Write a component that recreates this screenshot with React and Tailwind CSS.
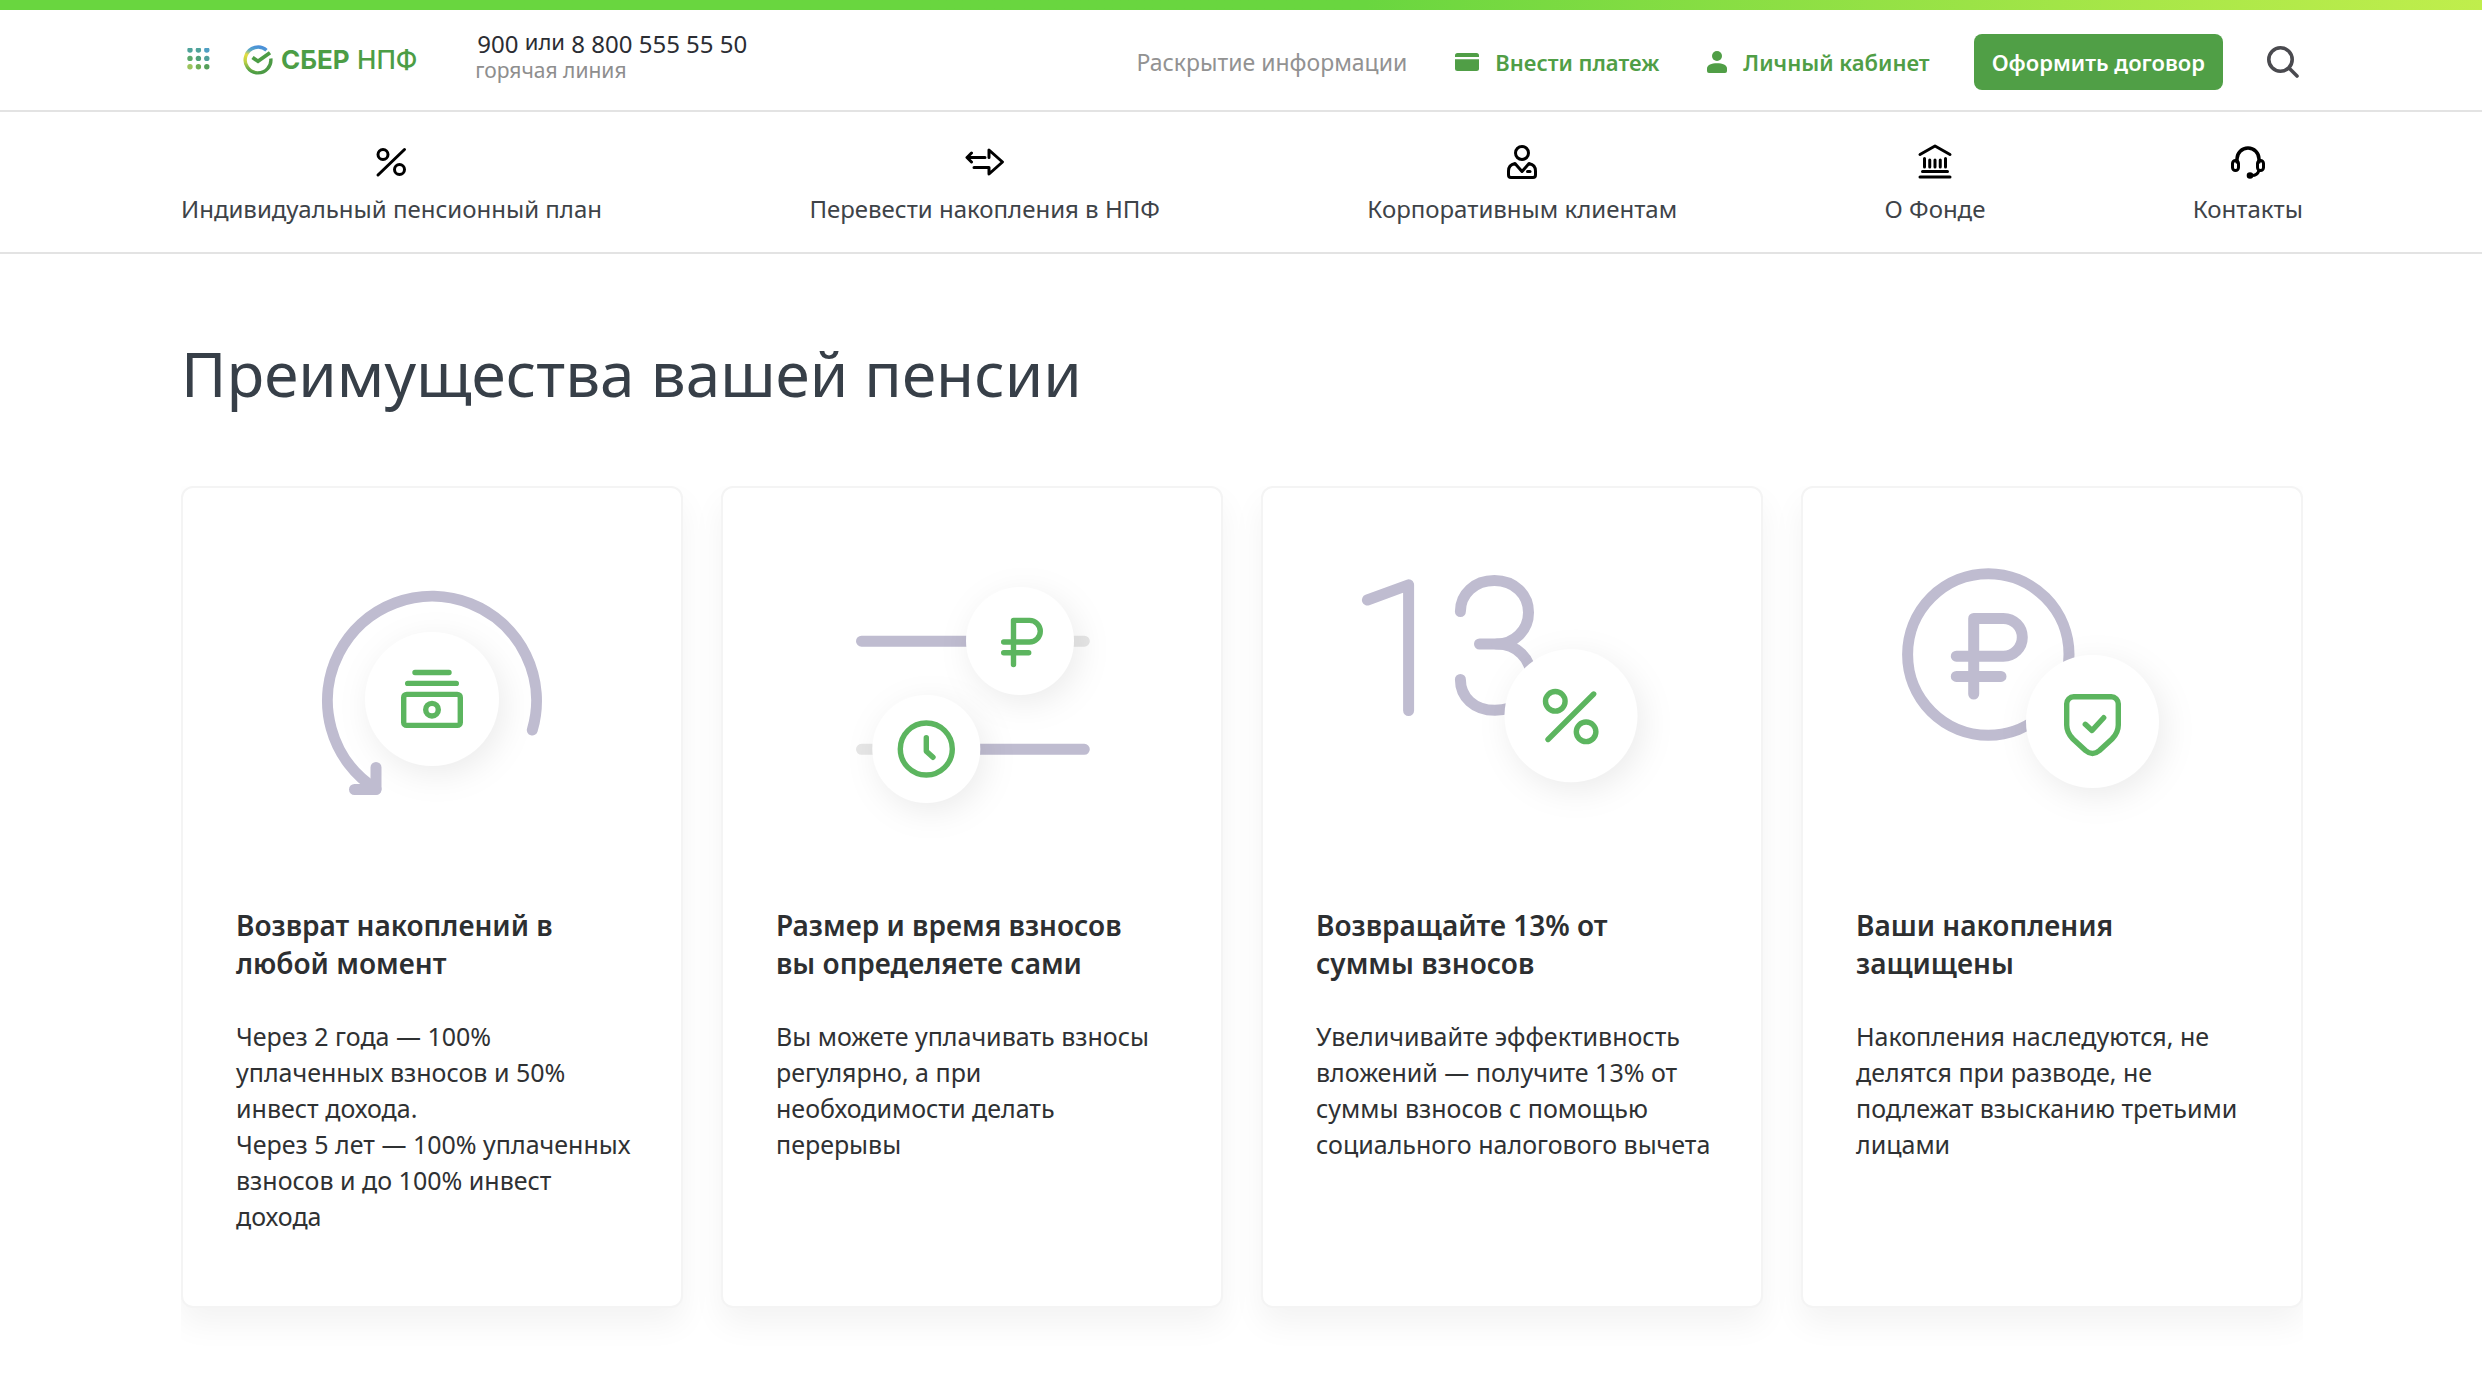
const navItems = [
  { label: "Индивидуальный пенсионный план", icon: <PercentIcon /> },
  { label: "Перевести накопления в НПФ", icon: <TransferIcon /> },
  { label: "Корпоративным клиентам", icon: <PersonIcon /> },
  { label: "О Фонде", icon: <BankIcon /> },
  { label: "Контакты", icon: <HeadsetIcon /> },
];

const benefits = [
  {
    title: "Возврат накоплений в\nлюбой момент",
    text: "Через 2 года — 100%\nуплаченных взносов и 50%\nинвест дохода.\nЧерез 5 лет — 100% уплаченных\nвзносов и до 100% инвест\nдохода",
    picture: <RefundPicture />,
  },
  {
    title: "Размер и время взносов\nвы определяете сами",
    text: "Вы можете уплачивать взносы\nрегулярно, а при\nнеобходимости делать\nперерывы",
    picture: <SlidersPicture />,
  },
  {
    title: "Возвращайте 13% от\nсуммы взносов",
    text: "Увеличивайте эффективность\nвложений — получите 13% от\nсуммы взносов с помощью\nсоциального налогового вычета",
    picture: <ThirteenPicture />,
  },
  {
    title: "Ваши накопления\nзащищены",
    text: "Накопления наследуются, не\nделятся при разводе, не\nподлежат взысканию третьими\nлицами",
    picture: <ShieldPicture />,
  },
];

function NavIcon({ children }) {
  return (
    <svg
      viewBox="0 0 40 40"
      className="size-10 fill-none stroke-black stroke-3"
      strokeLinecap="round"
      strokeLinejoin="round"
      aria-hidden="true"
    >
      {children}
    </svg>
  );
}

function PercentIcon() {
  return (
    <NavIcon>
      <circle cx="12" cy="12.500" r="5" />
      <circle cx="28.500" cy="27.500" r="5" />
      <path d="M33.500 7.500 7 33" />
    </NavIcon>
  );
}

function TransferIcon() {
  return (
    <NavIcon>
      <path d="M20 15.500H2.500M6.500 11 2 15.500 6.500 20" />
      <path d="M9 25.500H24V32L37.500 20 24 8V15.500" />
    </NavIcon>
  );
}

function PersonIcon() {
  return (
    <NavIcon>
      <circle cx="20" cy="11" r="6.500" />
      <path d="M13 21.500C8.500 22.500 6.500 25.500 6.500 29V33a2.500 2.500 0 0 0 2.500 2.500H31a2.500 2.500 0 0 0 2.500-2.500V29C33.500 25.500 31.500 22.500 27 21.500L20 29.500Z" />
      <path d="M25.500 29.500H28" />
    </NavIcon>
  );
}

function BankIcon() {
  return (
    <NavIcon>
      <path d="M5 12.500 20 4 35 12.500" />
      <path d="M9.500 16.500V25M14.750 18V25M20 18V25M25.250 18V25M30.500 16.500V25" />
      <path d="M7.500 29.500H32.500M5 35H35" />
    </NavIcon>
  );
}

function HeadsetIcon() {
  return (
    <NavIcon>
      <path d="M9 20V17a11 11 0 0 1 22 0v3" strokeWidth="3.500" />
      <rect x="4.500" y="18.500" width="6" height="10" rx="3" />
      <rect x="29.500" y="18.500" width="6" height="10" rx="3" />
      <path d="M31 28.500c-1 3-3.500 5-7 5" />
      <circle cx="22" cy="33.500" r="1.800" fill="black" />
    </NavIcon>
  );
}

function Picture({ viewBox, children }) {
  return (
    <svg
      viewBox={viewBox}
      className="mx-auto h-65 w-80 overflow-visible fill-none stroke-[#bfbcd0]"
      strokeWidth="11"
      strokeLinecap="round"
      strokeLinejoin="round"
      aria-hidden="true"
    >
      {children}
    </svg>
  );
}

function Disc(props) {
  return (
    <circle
      {...props}
      className="fill-white stroke-none drop-shadow-[5px_8px_16px_rgba(0,0,0,0.08)]"
    />
  );
}

function GreenLines({ children }) {
  return (
    <g className="stroke-[#5cb55f]" strokeWidth="5.4">
      {children}
    </g>
  );
}

function RefundPicture() {
  return (
    <Picture viewBox="-18 0 320 260">
      <Disc cx="142" cy="139" r="67" />
      <path d="M242.300 170A104.500 104.500 0 1 0 86 229" />
      <path d="M86 207.500V229.500H64.500" />
      <GreenLines>
        <path d="M125 112.500H159M117.700 123.400H166.300" />
        <rect x="113.700" y="134.400" width="56.600" height="31" rx="3" />
        <circle cx="142" cy="149.700" r="6.300" />
      </GreenLines>
    </Picture>
  );
}

function SlidersPicture() {
  return (
    <Picture viewBox="-8 0 320 260">
      <path d="M200 81.200H264.300M41.500 189.300H106" className="stroke-[#e6e6e6]" />
      <path d="M41.500 81.200H200M106 189.300H264.300" />
      <Disc cx="200" cy="81" r="54" />
      <Disc cx="106.300" cy="189" r="54" />
      <GreenLines>
        <path d="M193.500 104.500V60.400H209.500a10.800 10.800 0 0 1 0 21.600H183.700M183.700 92.700H208.700" />
        <circle cx="106.300" cy="189" r="26" />
        <path d="M106.300 177.700V191.200L113 197.300" />
      </GreenLines>
    </Picture>
  );
}

function ThirteenPicture() {
  return (
    <Picture viewBox="12 0 320 260">
      <path d="M27.400 40 68.600 24.800V150.500" />
      <path d="M120.400 51.500C120.400 34 134.500 20.500 154.400 20.500S188.500 34.500 188.500 52.500S174 84 157 84H139.500" />
      <path d="M157 84C177 84 191 99 191 117S177 150.300 155 150.300C134 150.300 120.400 137 120.400 119.500" />
      <Disc cx="231" cy="155.700" r="66.500" />
      <GreenLines>
        <circle cx="215.300" cy="141.300" r="9.800" />
        <circle cx="246.100" cy="171.800" r="9.800" />
        <path d="M208 179.500 253.700 134" />
      </GreenLines>
    </Picture>
  );
}

function ShieldPicture() {
  return (
    <Picture viewBox="12 10 320 260">
      <circle cx="108.300" cy="104.500" r="80.700" />
      <path d="M93.700 144V68.400H123.400a18.900 18.900 0 0 1 0 37.800H76.300M76.300 126.400H121" />
      <Disc cx="212.500" cy="171.500" r="66.500" />
      <GreenLines>
        <path d="M193.700 146.800H231.300a7 7 0 0 1 7 7V175C238.300 181 236 185 232 189L219.500 200.500C215 204.300 210 204.300 205.500 200.500L193 189C189 185 186.700 181 186.700 175V153.800a7 7 0 0 1 7-7Z" />
        <path d="M205.300 174.300 212 180.500 223.700 167.700" />
      </GreenLines>
    </Picture>
  );
}

function Logo() {
  return (
    <a href="#" className="flex items-center gap-2 text-[#4c9d45]">
      <svg viewBox="0 0 30 30" className="size-[30px] fill-none" aria-hidden="true">
        <defs>
          <linearGradient id="ring" x1="0.700" y1="0" x2="0.500" y2="1">
            <stop offset="0" stopColor="#4a90d9" />
            <stop offset="0.200" stopColor="#5aa9c4" />
            <stop offset="0.400" stopColor="#e6de3f" />
            <stop offset="0.700" stopColor="#b9d045" />
            <stop offset="1" stopColor="#4c9d45" />
          </linearGradient>
        </defs>
        <path d="M23.500 5.200A12.900 12.900 0 1 0 15 27.900" stroke="url(#ring)" strokeWidth="3.400" />
        <path d="M15 27.900A12.900 12.900 0 0 0 27.800 13.500" stroke="#4c9a45" strokeWidth="3.400" />
        <path d="M9.500 12.500 15 16.300 27 7.700" stroke="#4c9d45" strokeWidth="3.800" />
      </svg>
      <span className="font-['Inter',sans-serif] text-[26px] leading-8 whitespace-nowrap">
        <b>СБЕР</b> <span className="font-medium">НПФ</span>
      </span>
    </a>
  );
}

const Header = () => (
  <header className="flex h-[102px] items-center border-b-2 border-[#e3e3e3] pr-[179px] pl-[181px] text-[22px]">
    <button type="button" aria-label="Меню" className="ml-1.5">
      <svg viewBox="0 0 24 24" className="size-6">
        {[
          ["#4fa39b", "#4fa39b", "#4f9fc4"],
          ["#5aa86a", "#4fa07a", "#4f9f9b"],
          ["#9cc45c", "#6fae55", "#559f5a"],
        ].map((row, y) =>
          row.map((color, x) => (
            <circle key={`${x}-${y}`} cx={3 + x * 8.4} cy={2 + y * 8.4} r="2.7" fill={color} />
          ))
        )}
      </svg>
    </button>
    <div className="ml-8">
      <Logo />
    </div>
    <div className="ml-14 flex flex-col pb-2">
      <p className="pl-1 text-2xl leading-7 whitespace-nowrap text-[#2b2d33]">
        <a href="tel:900">900</a> <span className="align-[3px] text-[22px] leading-none">или</span>{" "}
        <a href="tel:88005555550">8 800 555 55 50</a>
      </p>
      <p className="pl-0.5 text-[21px] leading-6 text-[#8e8e8e]">горячая линия</p>
    </div>
    <div className="ml-auto flex items-center gap-11 pt-1 whitespace-nowrap">
      <div className="flex items-center gap-12">
        <a href="#" className="text-[23px] text-[#929292]">Раскрытие информации</a>
        <a href="#" className="flex items-center gap-4 font-semibold text-[#509e46]">
          <svg viewBox="0 0 24 18" className="h-[18px] w-6 fill-current" aria-hidden="true">
            <path d="M0 4V2.500A2.500 2.500 0 0 1 2.500 0H21.500A2.500 2.500 0 0 1 24 2.500V4Z" />
            <path d="M0 6.300H24V15.500A2.500 2.500 0 0 1 21.500 18H2.500A2.500 2.500 0 0 1 0 15.500Z" />
          </svg>
          Внести платеж
        </a>
        <a href="#" className="flex items-center gap-4 font-semibold text-[#509e46]">
          <svg viewBox="0 0 20 22" className="h-[22px] w-5 fill-current" aria-hidden="true">
            <circle cx="10" cy="5" r="5" />
            <path d="M0 20V17.500C0 14 4.500 12.300 10 12.300S20 14 20 17.500V20A2 2 0 0 1 18 22H2A2 2 0 0 1 0 20Z" />
          </svg>
          Личный кабинет
        </a>
      </div>
      <button type="button" className="h-14 rounded-lg bg-[#509f46] px-[18px] font-semibold text-white">
        Оформить договор
      </button>
      <button type="button" aria-label="Поиск" className="mr-1">
        <svg viewBox="0 0 32 32" className="size-8 fill-none stroke-[#4a4a4f]" strokeWidth="3.600" strokeLinecap="round">
          <circle cx="13.500" cy="13.500" r="11.700" />
          <path d="M22 22 30 30" />
        </svg>
      </button>
    </div>
  </header>
);

const Nav = () => (
  <nav className="flex justify-between border-b-2 border-[#e3e3e3] pt-[30px] pr-[179px] pb-[26px] pl-[181px]">
    {navItems.map(({ label, icon }) => (
      <a key={label} href="#" className="flex flex-col items-center gap-2.5 text-2xl leading-[34px] text-[#3e4348]">
        {icon}
        {label}
      </a>
    ))}
  </nav>
);

const BenefitCard = ({ title, text, picture }) => (
  <article className="rounded-xl border-2 border-[#f4f4f4] bg-white pt-18 pr-11 pb-18 pl-[53px] shadow-[0_16px_32px_rgba(0,0,0,0.05)]">
    <div className="-mr-11 -ml-[53px]">{picture}</div>
    <h2 className="mt-[86px] text-[28px] leading-[38px] font-semibold whitespace-pre-line text-[#2d2f31]">
      {title}
    </h2>
    <p className="mt-9 text-[25px] leading-9 whitespace-pre-line text-[#2f3133]">{text}</p>
  </article>
);

const App = () => (
  <div className="min-h-screen bg-white font-['Noto_Sans',sans-serif]">
    <div className="h-2.5 bg-linear-to-r from-[#69d63f] from-55% to-[#c0ee4c]" />
    <Header />
    <Nav />
    <main className="pt-[77px] pr-[179px] pl-[181px]">
      <h1 className="text-[62px] leading-[84px] text-[#373f48]">Преимущества вашей пенсии</h1>
      <section className="mt-[71px] grid grid-cols-4 gap-[38px] overflow-hidden pb-10">
        {benefits.map((item) => (
          <BenefitCard key={item.title} {...item} />
        ))}
      </section>
    </main>
  </div>
);

export default App;
